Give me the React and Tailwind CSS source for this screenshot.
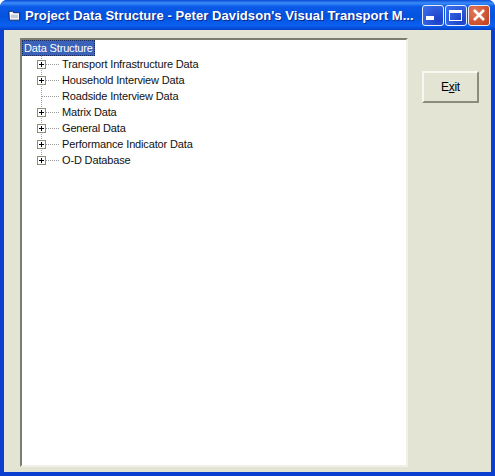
import React from 'react';

const rows = [
  { label: 'Transport Infrastructure Data', box: true },
  { label: 'Household Interview Data', box: true },
  { label: 'Roadside Interview Data', box: false },
  { label: 'Matrix Data', box: true },
  { label: 'General Data', box: true },
  { label: 'Performance Indicator Data', box: true },
  { label: 'O-D Database', box: true, last: true },
];

// connector lines and the +/- box drawn for one tree row
const Connector = ({ box, last }) => (
  <svg width="40" height="16" className="shrink-0" shapeRendering="crispEdges">
    <line x1="19.5" y1="0" x2="19.5" y2={last ? 8 : 16} stroke="#9a9a9a" strokeDasharray="1 1" />
    <line x1="20" y1="8.5" x2="38" y2="8.5" stroke="#9a9a9a" strokeDasharray="1 1" />
    {box && (
      <>
        <rect x="15.5" y="4.5" width="8" height="8" fill="#ffffff" stroke="#8c8c7c" />
        <line x1="17" y1="8.5" x2="22" y2="8.5" stroke="#000000" />
        <line x1="19.5" y1="6" x2="19.5" y2="11" stroke="#000000" />
      </>
    )}
  </svg>
);

const TitleButton = ({ className, children }) => (
  <div className={`w-[22px] h-[21px] shrink-0 rounded-[3px] border border-[#e8eefc] ${className}`}>
    <svg width="20" height="19" viewBox="0 0 20 19">{children}</svg>
  </div>
);

const App = () => {
  return (
    <div className="w-[495px] h-[476px] bg-white overflow-hidden">
      <div className="h-full flex flex-col rounded-t-[7px] bg-[#0a3fd0] font-['Liberation_Sans',sans-serif]">
        {/* Title bar */}
        <div className="h-[30px] shrink-0 flex items-center pl-[8px] pr-[5px] rounded-t-[7px] bg-[linear-gradient(180deg,#0a4ad8_0%,#3a8cf8_10%,#0a5ae8_22%,#0453df_55%,#0a60f0_85%,#0340c8_100%)]">
          <svg width="13" height="13" viewBox="0 0 14 14" className="shrink-0">
            <path d="M1 2.5h4l1 1.5h6.5v8H1.5z" fill="#ffffff" stroke="#10205a" />
            <path d="M3 6h8v4H3z" fill="#c4cad8" />
          </svg>
          <span className="ml-[4px] text-[13px] leading-none font-bold tracking-[0.07px] text-white whitespace-nowrap [text-shadow:1px_1px_0_#0a2a90]">
            Project Data Structure - Peter Davidson's Visual Transport M...
          </span>
          <div className="ml-auto flex gap-[1px]">
            <TitleButton className="bg-[radial-gradient(circle_at_75%_75%,#1a40c8,#3f72ec)]">
              <rect x="3" y="10" width="8" height="4" fill="#ffffff" />
            </TitleButton>
            <TitleButton className="bg-[radial-gradient(circle_at_75%_75%,#1a40c8,#3f72ec)]">
              <rect x="3.5" y="4.5" width="12" height="10" fill="none" stroke="#ffffff" />
              <rect x="3" y="4" width="13" height="3" fill="#ffffff" />
            </TitleButton>
            <TitleButton className="bg-[radial-gradient(circle_at_30%_30%,#e07a5c,#c43a14)]">
              <path d="M5 4l10 10M15 4L5 14" stroke="#ffffff" strokeWidth="2.6" />
            </TitleButton>
          </div>
        </div>

        {/* Window body */}
        <div className="flex-1 flex items-start mx-[4px] mb-[4px] bg-[#e4e4d4] pl-[16px] pt-[8px]">
          {/* Tree view */}
          <div className="w-[388px] h-[429px] shrink-0 bg-white border-2 border-t-[#7c7c70] border-l-[#7c7c70] border-r-[#f0f0e8] border-b-[#f0f0e8] text-[11px] tracking-[-0.15px] text-[#111111]">
            <div className="h-[16px] flex items-center">
              <span className="w-[73px] h-[16px] leading-[16px] px-[2px] whitespace-nowrap bg-[#3a62b8] text-white outline-1 outline-dotted outline-[#1a2a60] -outline-offset-1">
                Data Structure
              </span>
            </div>
            {rows.map((row) => (
              <div key={row.label} className="h-[16px] flex items-center whitespace-nowrap">
                <Connector box={row.box} last={row.last} />
                <span>{row.label}</span>
              </div>
            ))}
          </div>

          {/* Exit button */}
          <button className="ml-[14px] mt-[33px] w-[57px] h-[32px] shrink-0 bg-[#e4e4d4] text-[12px] tracking-[-0.3px] text-black border-2 border-t-[#f8f8f0] border-l-[#f8f8f0] border-r-[#8c8c7c] border-b-[#8c8c7c]">
            E<span className="underline">x</span>it
          </button>
        </div>
      </div>
    </div>
  );
};

export default App;
